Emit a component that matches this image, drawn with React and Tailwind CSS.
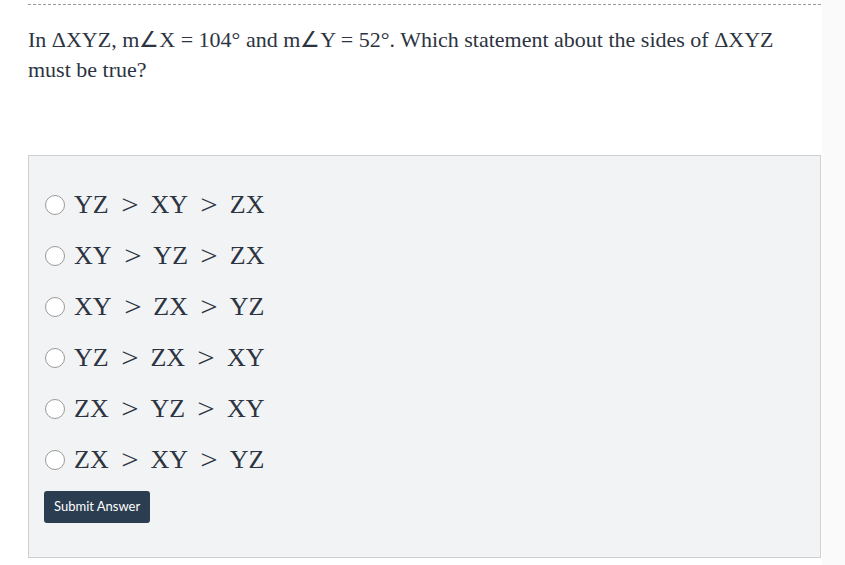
const options = [
  ["YZ", "XY", "ZX"],
  ["XY", "YZ", "ZX"],
  ["XY", "ZX", "YZ"],
  ["YZ", "ZX", "XY"],
  ["ZX", "YZ", "XY"],
  ["ZX", "XY", "YZ"],
];

function MathOption({ parts }) {
  return (
    <span className="flex items-center text-[26px] leading-none text-[#2c3441] font-['Liberation_Serif',serif]">
      <span>{parts[0]}</span>
      <span className="mx-[13px] text-[28px] font-light scale-x-110">&gt;</span>
      <span>{parts[1]}</span>
      <span className="mx-[13px] text-[28px] font-light scale-x-110">&gt;</span>
      <span>{parts[2]}</span>
    </span>
  );
}

export default function App() {
  return (
    <div className="flex w-[845px] h-[565px] bg-white overflow-hidden">
      <div className="w-[822px] pl-[28px] pr-px pt-[4px]">
        <div className="border-t border-dashed border-[#9a9a9a]" />

        <p className="mt-[20px] text-[22px] leading-[30px] text-[#2c3441] font-['Liberation_Serif',serif]">
          In ΔXYZ, m∠X = 104° and m∠Y = 52°. Which statement about the sides of ΔXYZ must be true?
        </p>

        <div className="mt-[70px] h-[403px] border border-[#cfcfcf] bg-[#f2f3f5] px-[15px] pt-[23px]">
          <div className="flex flex-col">
            {options.map((o, i) => (
              <label key={i} className="flex items-center h-[51px] gap-[9px] pl-px">
                <span className="w-[20px] h-[20px] rounded-full border border-[#9a9a9a] bg-white" />
                <MathOption parts={o} />
              </label>
            ))}
          </div>
          <button className="mt-[6px] h-[32px] px-[10px] rounded-[3px] bg-[#2b3d50] text-white text-[13px] font-['Lato',sans-serif]">
            Submit Answer
          </button>
        </div>
      </div>
      <div className="flex-1 bg-[#fafafa]" />
    </div>
  );
}
